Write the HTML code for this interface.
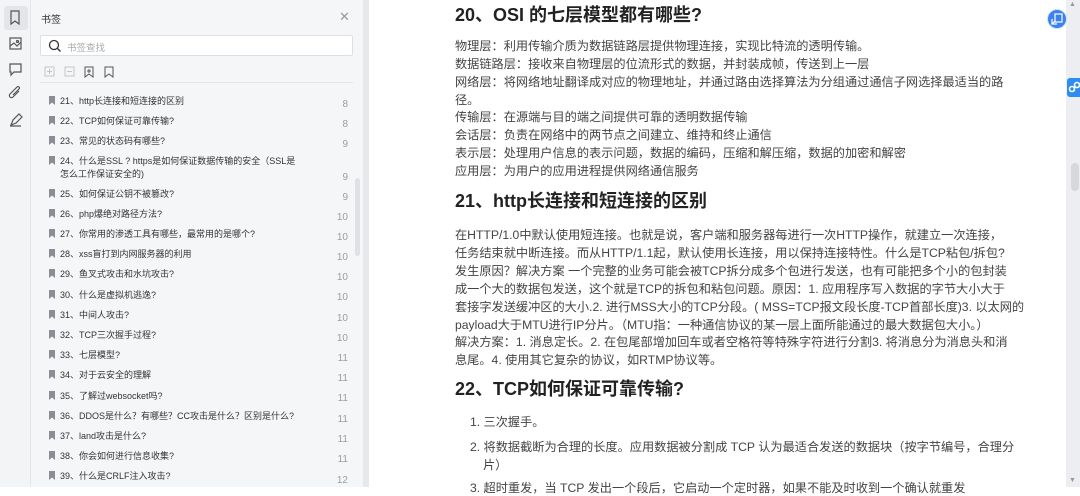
<!DOCTYPE html>
<html><head><meta charset="utf-8"><style>
*{margin:0;padding:0;box-sizing:border-box}
body{width:1080px;height:487px;overflow:hidden;position:relative;background:#fff;font-family:"Liberation Sans","Noto Sans CJK SC",sans-serif}
.abs{position:absolute;white-space:nowrap}
#rail{left:0;top:0;width:31px;height:487px;background:#f3f4f6;border-right:1px solid #e3e5e8;position:absolute}
#side{left:31px;top:0;width:332px;height:487px;background:#f5f6f8;position:absolute}
#gap{left:363px;top:0;width:6px;height:487px;background:#e7e8ea;position:absolute}
#rs{left:1066px;top:0;width:14px;height:487px;background:#eceef1;position:absolute}
.it{position:absolute;left:49px;font-size:9px;color:#333;white-space:nowrap}
.it i{display:inline-block;width:6px;height:9px;background:#8a8d93;margin-right:5px;vertical-align:-1px;clip-path:polygon(0 0,100% 0,100% 100%,50% 72%,0 100%)}
.pn{position:absolute;left:330px;width:18px;text-align:right;font-size:10px;color:#9a9da3}
.d{position:absolute;left:455px;font-size:12.2px;color:#444;white-space:nowrap}
.h{position:absolute;left:455px;font-size:18px;font-weight:bold;color:#222;white-space:nowrap}
</style></head><body>
<div id="rail"></div>
<div style="position:absolute;left:4px;top:6px;width:24px;height:24px;background:#e3e5e8;border-radius:3px"></div>
<svg class="abs" style="left:0;top:0" width="31" height="140" fill="none" stroke="#555" stroke-width="1.2">
<path d="M11 11h8v13l-4-3-4 3z"/>
<rect x="10" y="38" width="11" height="11"/><path d="M10 46l4-3 3 3 4-4"/><circle cx="17.5" cy="41.5" r="1"/>
<path d="M10 64h11v8h-7l-3 3v-3h-1z"/>
<path d="M19 91l-6 6a2 2 0 0 1-3-3l7-7a1.3 1.3 0 0 1 2 2l-6 6"/>
<path d="M11 125l2-5 6-6 3 3-6 6-5 2zM10 126h11"/>
</svg>
<div id="side"></div>
<div class="abs" style="left:41px;top:11px;font-size:10px;color:#333">书签</div>
<div class="abs" style="left:339px;top:9px;font-size:13px;color:#999">✕</div>
<div style="position:absolute;left:40px;top:35px;width:313px;height:21px;background:#fff;border:1px solid #dcdfe3;border-radius:2px"></div>
<svg class="abs" style="left:48px;top:39px" width="14" height="14" fill="none" stroke="#333" stroke-width="1.3"><circle cx="6" cy="6" r="4.5"/><path d="M9.5 9.5l3 3"/></svg>
<div class="abs" style="left:67px;top:40px;font-size:9.5px;color:#aaa">书签查找</div>
<svg class="abs" style="left:42px;top:64px" width="80" height="16" fill="none" stroke-width="1">
<rect x="3" y="3" width="9" height="9" stroke="#c3c5c9"/><path d="M5 7.5h5M7.5 5v5" stroke="#c3c5c9"/>
<rect x="23" y="3" width="9" height="9" stroke="#c3c5c9"/><path d="M25 7.5h5" stroke="#c3c5c9"/>
<path d="M43 3h8v10l-4-3-4 3z M47 5v4M45 7h4" stroke="#555"/>
<path d="M63 3h8v10l-4-3-4 3z" stroke="#555"/>
</svg>
<div style="position:absolute;left:40px;top:82px;width:313px;height:1px;background:#e3e5e8"></div>
<div style="position:absolute;left:355px;top:178px;width:5px;height:78px;background:#dfe1e4;border-radius:3px"></div>

<div class="it" style="top:94px"><i></i>21、http长连接和短连接的区别</div><div class="pn" style="top:99px">8</div>
<div class="it" style="top:114px"><i></i>22、TCP如何保证可靠传输?</div><div class="pn" style="top:119px">8</div>
<div class="it" style="top:134px"><i></i>23、常见的状态码有哪些?</div><div class="pn" style="top:139px">9</div>
<div class="it" style="top:154px"><i></i>24、什么是SSL ? https是如何保证数据传输的安全（SSL是</div>
<div class="it" style="top:167px;left:60px">怎么工作保证安全的)</div><div class="pn" style="top:172px">9</div>
<div class="it" style="top:187px"><i></i>25、如何保证公钥不被篡改?</div><div class="pn" style="top:192px">9</div>
<div class="it" style="top:207px"><i></i>26、php爆绝对路径方法?</div><div class="pn" style="top:212px">10</div>
<div class="it" style="top:227px"><i></i>27、你常用的渗透工具有哪些，最常用的是哪个?</div><div class="pn" style="top:232px">10</div>
<div class="it" style="top:247px"><i></i>28、xss盲打到内网服务器的利用</div><div class="pn" style="top:252px">10</div>
<div class="it" style="top:267px"><i></i>29、鱼叉式攻击和水坑攻击?</div><div class="pn" style="top:272px">10</div>
<div class="it" style="top:288px"><i></i>30、什么是虚拟机逃逸?</div><div class="pn" style="top:292px">10</div>
<div class="it" style="top:308px"><i></i>31、中间人攻击?</div><div class="pn" style="top:313px">10</div>
<div class="it" style="top:328px"><i></i>32、TCP三次握手过程?</div><div class="pn" style="top:333px">10</div>
<div class="it" style="top:348px"><i></i>33、七层模型?</div><div class="pn" style="top:353px">11</div>
<div class="it" style="top:368px"><i></i>34、对于云安全的理解</div><div class="pn" style="top:373px">11</div>
<div class="it" style="top:389px"><i></i>35、了解过websocket吗?</div><div class="pn" style="top:393px">11</div>
<div class="it" style="top:409px"><i></i>36、DDOS是什么？有哪些？CC攻击是什么？区别是什么?</div><div class="pn" style="top:414px">11</div>
<div class="it" style="top:429px"><i></i>37、land攻击是什么?</div><div class="pn" style="top:434px">11</div>
<div class="it" style="top:449px"><i></i>38、你会如何进行信息收集?</div><div class="pn" style="top:454px">11</div>
<div class="it" style="top:469px"><i></i>39、什么是CRLF注入攻击?</div><div class="pn" style="top:475px">12</div>

<div id="gap"></div>

<div class="h" style="top:1px">20、OSI 的七层模型都有哪些?</div>
<div class="d" style="top:36px">物理层：利用传输介质为数据链路层提供物理连接，实现比特流的透明传输。</div>
<div class="d" style="top:54px">数据链路层：接收来自物理层的位流形式的数据，并封装成帧，传送到上一层</div>
<div class="d" style="top:72px">网络层：将网络地址翻译成对应的物理地址，并通过路由选择算法为分组通过通信子网选择最适当的路</div>
<div class="d" style="top:90px">径。</div>
<div class="d" style="top:107px">传输层：在源端与目的端之间提供可靠的透明数据传输</div>
<div class="d" style="top:125px">会话层：负责在网络中的两节点之间建立、维持和终止通信</div>
<div class="d" style="top:143px">表示层：处理用户信息的表示问题，数据的编码，压缩和解压缩，数据的加密和解密</div>
<div class="d" style="top:161px">应用层：为用户的应用进程提供网络通信服务</div>
<div class="h" style="top:187px">21、http长连接和短连接的区别</div>
<div class="d" style="top:225px">在HTTP/1.0中默认使用短连接。也就是说，客户端和服务器每进行一次HTTP操作，就建立一次连接，</div>
<div class="d" style="top:243px">任务结束就中断连接。而从HTTP/1.1起，默认使用长连接，用以保持连接特性。什么是TCP粘包/拆包?</div>
<div class="d" style="top:261px">发生原因？解决方案 一个完整的业务可能会被TCP拆分成多个包进行发送，也有可能把多个小的包封装</div>
<div class="d" style="top:279px">成一个大的数据包发送，这个就是TCP的拆包和粘包问题。原因：1. 应用程序写入数据的字节大小大于</div>
<div class="d" style="top:297px">套接字发送缓冲区的大小.2. 进行MSS大小的TCP分段。( MSS=TCP报文段长度-TCP首部长度)3. 以太网的</div>
<div class="d" style="top:315px">payload大于MTU进行IP分片。（MTU指：一种通信协议的某一层上面所能通过的最大数据包大小。）</div>
<div class="d" style="top:332px">解决方案：1. 消息定长。2. 在包尾部增加回车或者空格符等特殊字符进行分割3. 将消息分为消息头和消</div>
<div class="d" style="top:350px">息尾。4. 使用其它复杂的协议，如RTMP协议等。</div>
<div class="h" style="top:375px">22、TCP如何保证可靠传输?</div>
<div class="d" style="top:412px;left:470px">1. 三次握手。</div>
<div class="d" style="top:437px;left:470px">2. 将数据截断为合理的长度。应用数据被分割成 TCP 认为最适合发送的数据块（按字节编号，合理分</div>
<div class="d" style="top:455px;left:483px">片）</div>
<div class="d" style="top:478px;left:470px">3. 超时重发，当 TCP 发出一个段后，它启动一个定时器，如果不能及时收到一个确认就重发</div>

<div id="rs"></div>
<div class="abs" style="left:1069px;top:1px;font-size:7px;color:#999">▲</div>
<div class="abs" style="left:1069px;top:477px;font-size:7px;color:#999">▼</div>
<div style="position:absolute;left:1071px;top:163px;width:8px;height:28px;background:#d6d8dc;border-radius:4px"></div>
<div style="position:absolute;left:1047px;top:9px;width:20px;height:20px;background:#3b82f0;border-radius:50%;border:1px solid #cfe0fb"></div>
<svg class="abs" style="left:1051px;top:13px" width="12" height="12" fill="none" stroke="#fff" stroke-width="1.2"><rect x="4" y="1" width="7" height="8"/><path d="M1 6v5h5M1 11l3-3"/></svg>
<div style="position:absolute;left:1067px;top:78px;width:13px;height:19px;background:#2e8cf0;border-radius:3px 0 0 3px"></div>
<svg class="abs" style="left:1068px;top:81px" width="12" height="13" fill="none" stroke="#fff" stroke-width="1.6"><circle cx="4" cy="8" r="2.5"/><circle cx="9" cy="4" r="2.5"/></svg>
</body></html>
